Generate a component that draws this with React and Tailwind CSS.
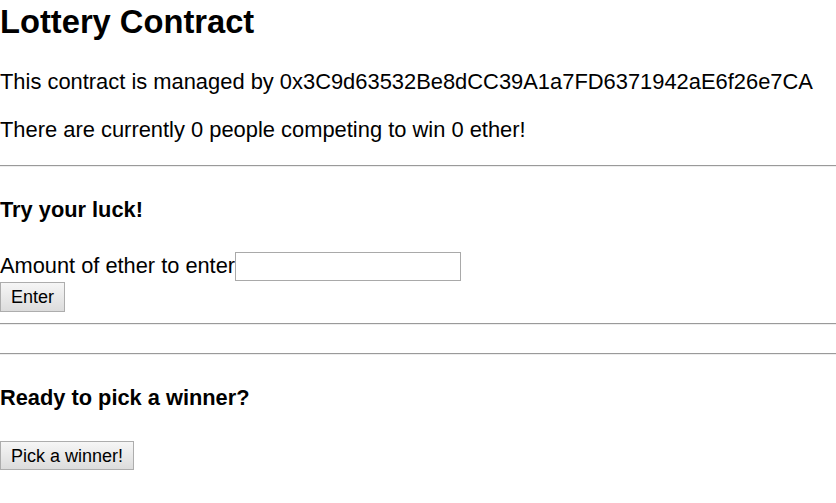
export default function App() {
  const btn =
    "block border border-[#adadad] bg-gradient-to-b from-[#f6f6f6] to-[#dcdcdc] px-[10px] text-[18px] leading-none text-black font-['Liberation_Sans',Arial,sans-serif]";
  const hr = "border-0 border-t border-t-[#9a9a9a] border-b border-b-[#eeeeee] h-[2px]";
  return (
    <div className="min-h-screen bg-white text-black font-['Liberation_Sans',Arial,sans-serif] text-[21.9px] leading-[25px]">
      <h2 className="pt-[3px] text-[32.7px] font-bold leading-[38px]">Lottery Contract</h2>
      <p className="mt-[28px]">
        This contract is managed by 0x3C9d63532Be8dCC39A1a7FD6371942aE6f26e7CA
      </p>
      <p className="mt-[23px]">There are currently 0 people competing to win 0 ether!</p>
      <div className={`mt-[23px] ${hr}`} />
      <h4 className="mt-[30px] text-[21.8px] font-bold">Try your luck!</h4>
      <div className="mt-[30px] flex items-start">
        <span className="mt-[1px] text-[21.8px]">Amount of ether to enter</span>
        <input className="h-[29px] w-[226px] border border-[#a9a9a9] bg-white px-1 outline-none" />
      </div>
      <button className={`mt-[1px] h-[30px] ${btn}`}>Enter</button>
      <div className={`mt-[11px] ${hr}`} />
      <div className={`mt-[28px] ${hr}`} />
      <h4 className="mt-[30px] text-[21.8px] font-bold">Ready to pick a winner?</h4>
      <button className={`mt-[31px] h-[29px] ${btn}`}>Pick a winner!</button>
    </div>
  );
}
